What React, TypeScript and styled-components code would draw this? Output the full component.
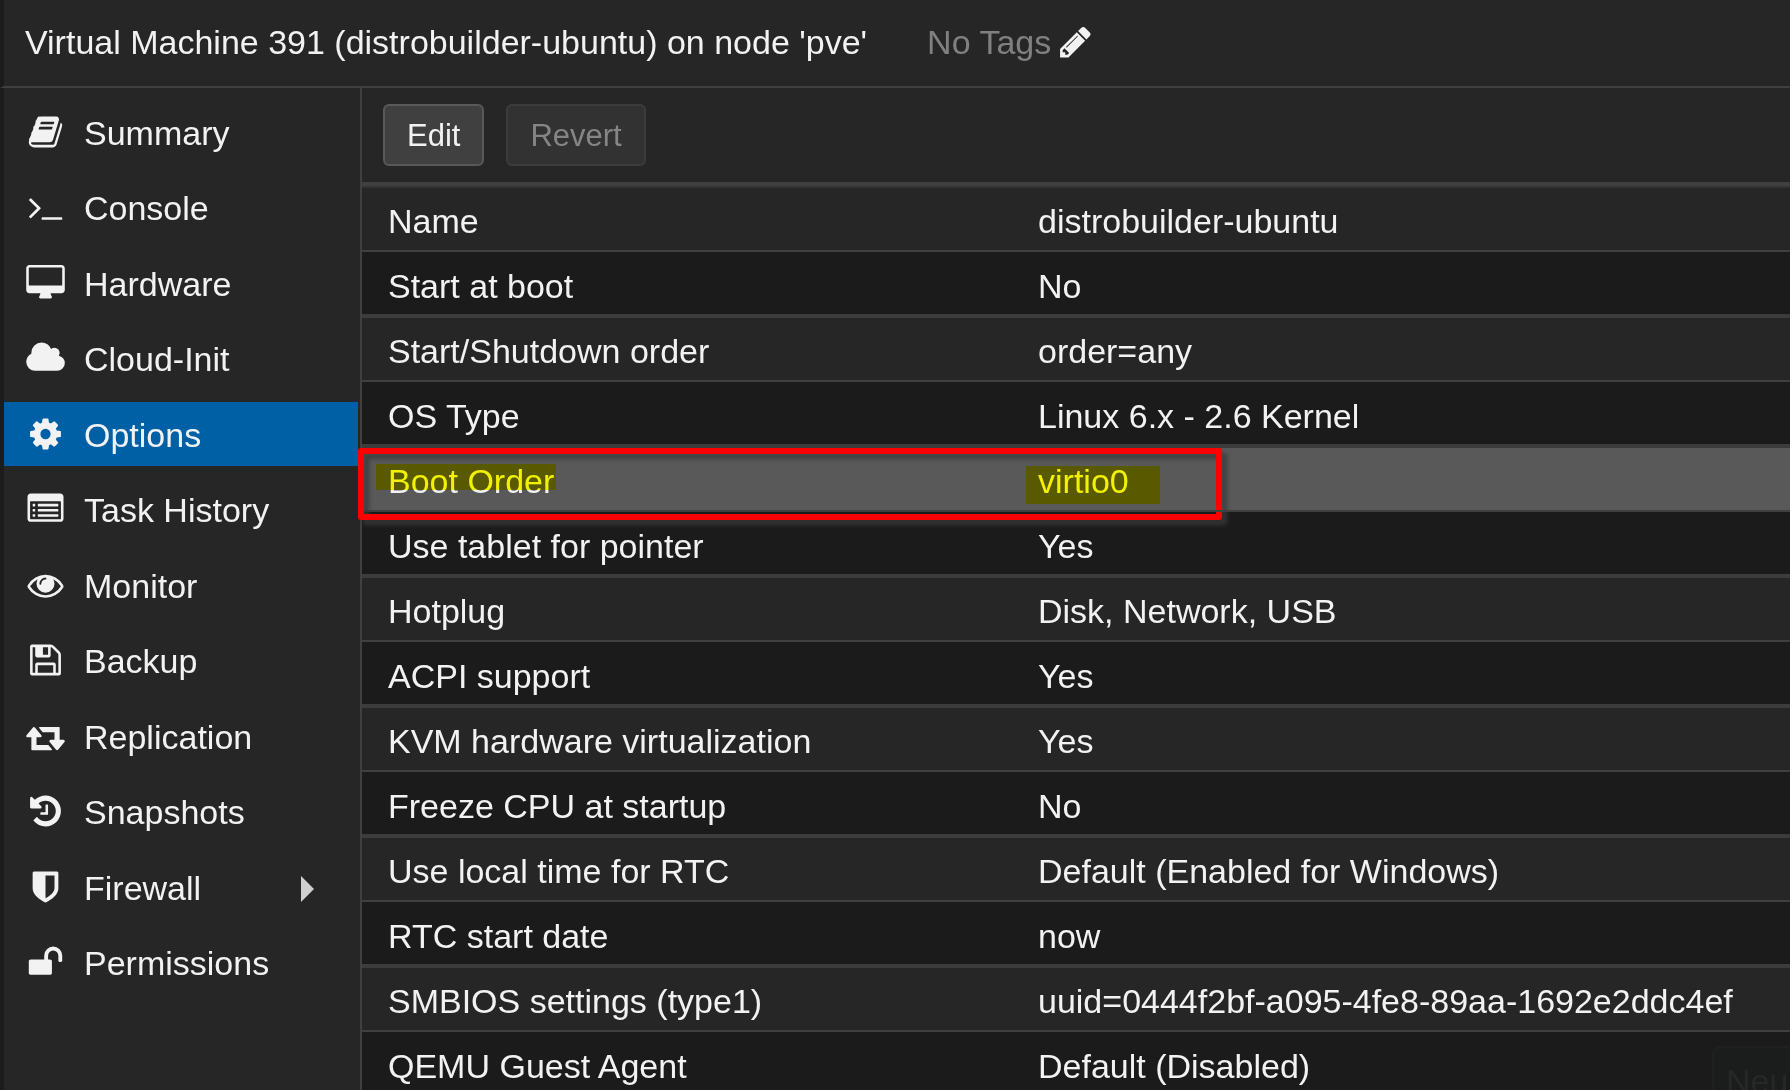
import React from 'react';
import styled, { createGlobalStyle, css } from 'styled-components';

const GlobalStyle = createGlobalStyle`
  *, *::before, *::after { box-sizing: border-box; }
  html, body, #root { height: 100%; }
  body {
    margin: 0;
    overflow: hidden;
    background: #262626;
    color: #f2f2f2;
    font: 34px/40px "Liberation Sans", Arial, sans-serif;
  }
`;

const Page = styled.div`
  position: relative;
  height: 100%;
  display: flex;
  flex-direction: column;
  overflow: hidden;
  border: solid #ffffff;
  border-width: 0 2px 2px 0;
`;

const Header = styled.header`
  flex: none;
  display: flex;
  align-items: center;
  height: 88px;
  padding: 0 21px 2px;
  border-left: 4px solid #1c1c1c;
  border-bottom: 2px solid #404040;
`;

const Title = styled.h1`
  margin: 0 60px 0 0;
  font-size: 34px;
  font-weight: 400;
  white-space: nowrap;
`;

const TagButton = styled.button`
  display: flex;
  align-items: center;
  gap: 5px;
  padding: 0;
  border: 0;
  background: none;
  color: #808080;
  font: inherit;
  cursor: pointer;
`;

const Body = styled.div`
  flex: 1;
  min-height: 0;
  display: flex;
`;

const Sidebar = styled.nav`
  flex: none;
  width: 362px;
  padding: 12px 2px 0 0;
  border-left: 4px solid #1c1c1c;
  border-right: 2px solid #404040;
`;

const Menu = styled.ul`
  display: flex;
  flex-direction: column;
  justify-content: space-between;
  min-height: 894px;
  margin: 0;
  padding: 0;
  list-style: none;
`;

const MenuLink = styled.a<{ $active?: boolean }>`
  display: flex;
  align-items: center;
  gap: 19px;
  height: 64px;
  padding: 0 44px 0 21px;
  color: inherit;
  text-decoration: none;
  ${p => p.$active && css`background: #0060a6;`}
`;

const IconSlot = styled.span`
  display: flex;
  justify-content: center;
  width: 40px;
`;

const Glyph = styled.svg`
  display: block;
  width: 39px;
  height: 36px;
  fill: #f2f2f2;
`;

const Arrow = styled.svg`
  display: block;
  width: 13px;
  height: 26px;
  margin-top: 4px;
  fill: #cfcfcf;
`;

const MenuLabel = styled.span`
  flex: 1;
  padding-top: 2px;
  white-space: nowrap;
`;

const Main = styled.main`
  flex: 1;
  min-width: 0;
`;

const Toolbar = styled.div`
  display: flex;
  gap: 22px;
  padding: 16px 21px;
  border-bottom: 4px solid #404040;
`;

const ToolButton = styled.button`
  height: 62px;
  padding: 2px 22px 0;
  border: 2px solid #595959;
  border-radius: 6px;
  background: #404040;
  color: #f2f2f2;
  font: inherit;
  font-size: 31px;
  &:disabled {
    border-color: #3c3c3c;
    background: #323232;
    color: #858585;
  }
`;

const OptionTable = styled.table`
  width: 100%;
  table-layout: fixed;
  border-collapse: separate;
  border-spacing: 0;
  border-top: 2px solid #333333;
`;

const OptionRow = styled.tr<{ $selected?: boolean }>`
  background: ${p => (p.$selected ? '#595959' : '#262626')};
  &:nth-child(even) { background: #1b1b1b; }
`;

const cell = css`
  position: relative;
  height: 64px;
  padding: 4px 0 0 26px;
  border-bottom: 2px solid #404040;
  font-weight: 400;
  text-align: left;
  white-space: nowrap;
  tr:nth-child(even) > & {
    height: 66px;
    padding-top: 6px;
    border-bottom: 4px solid #3c3c3c;
  }
`;

const NameCell = styled.th`
  ${cell}
  width: 650px;
`;

const ValueCell = styled.td`
  ${cell}
`;

const Marker = styled.span<{ $top: number; $width: number; $height: number }>`
  position: absolute;
  left: 14px;
  top: ${p => p.$top}px;
  width: ${p => p.$width}px;
  height: ${p => p.$height}px;
  background: #ffff00;
  mix-blend-mode: multiply;
  pointer-events: none;
`;

const Frame = styled.span`
  position: absolute;
  left: -4px;
  top: 0;
  width: 864px;
  height: 72px;
  border: 6px solid #ff0000;
  border-radius: 3px;
  filter: drop-shadow(5px 5px 2px rgba(58, 58, 58, 0.8));
  pointer-events: none;
`;

const GhostButton = styled.button`
  position: absolute;
  right: 0;
  bottom: 0;
  width: 78px;
  height: 44px;
  padding: 13px 0 0 12px;
  overflow: hidden;
  border: solid #202020;
  border-width: 2px 0 0 2px;
  border-radius: 8px 0 0 0;
  background: #1b1d1c;
  color: #262727;
  font: inherit;
  text-align: left;
`;

const icons = {
  book: 'M1703 478q40 57 18 129l-275 906q-19 64-76.500 107.500t-122.500 43.500h-923q-77 0-148.500-53.500t-99.500-131.500q-24-67-2-127 0-4 3-27t4-37q1-8-3-21.500t-3-19.500q2-11 8-21t16.500-23.500 16.500-23.500q23-38 45-91.500t30-91.500q3-10 .5-30t-.5-28q3-11 17-28t17-23q21-36 42-92t25-90q1-9-2.500-32t.5-28q4-13 22-30.500t22-22.500q19-26 42.500-84.500t27.500-96.500q1-8-3-25.500t-2-26.500q2-8 9-18t18-23 17-21q8-12 16.500-30.500t15-35 16-36 19.500-32 26.500-23.500 36-11.500 47.500 5.500l-1 3q38-9 51-9h761q74 0 114 56t18 130l-274 906q-36 119-71.500 153.500t-128.500 34.500h-869q-27 0-38 15-11 16-1 43 24 70 144 70h923q29 0 56-15.500t35-41.500l300-987q7-22 5-57 38 15 59 43zm-1064 2q-4 13 2 22.500t20 9.500h608q13 0 25.500-9.500t16.500-22.500l21-64q4-13-2-22.500t-20-9.500h-608q-13 0-25.500 9.500t-16.500 22.500zm-83 256q-4 13 2 22.500t20 9.500h608q13 0 25.500-9.500t16.500-22.500l21-64q4-13-2-22.500t-20-9.500h-608q-13 0-25.500 9.500t-16.500 22.500z',
  terminal: 'M649 983l-466 466q-10 10-23 10t-23-10l-50-50q-10-10-10-23t10-23l393-393-393-393q-10-10-10-23t10-23l50-50q10-10 23-10t23 10l466 466q10 10 10 23t-10 23zm1079 457v64q0 14-9 23t-23 9h-960q-14 0-23-9t-9-23v-64q0-14 9-23t23-9h960q14 0 23 9t9 23z',
  desktop: 'M1728 992v-832q0-13-9.500-22.500t-22.500-9.500h-1600q-13 0-22.500 9.500t-9.500 22.500v832q0 13 9.500 22.500t22.500 9.500h1600q13 0 22.500-9.500t9.500-22.500zm128-832v1088q0 66-47 113t-113 47h-544q0 37 16 77.500t32 71 16 43.500q0 26-19 45t-45 19h-512q-26 0-45-19t-19-45q0-14 16-44t32-70 16-78h-544q-66 0-113-47t-47-113v-1088q0-66 47-113t113-47h1600q66 0 113 47t47 113z',
  cloud: 'M1856 1152q0 159-112.500 271.500t-271.500 112.500h-1088q-185 0-316.500-131.500t-131.500-316.500q0-132 71-241.500t187-163.500q-2-28-2-43 0-212 150-362t362-150q158 0 286.500 88t187.500 230q70-62 166-62 106 0 181 75t75 181q0 75-41 138 129 30 213 134.500t84 239.500z',
  cog: 'M1152 896q0-106-75-181t-181-75-181 75-75 181 75 181 181 75 181-75 75-181zm512-109v222q0 12-8 23t-20 13l-185 28q-19 54-39 91 35 50 107 138 10 12 10 25t-9 23q-27 37-99 108t-94 71q-12 0-26-9l-138-108q-44 23-91 38-16 136-29 186-7 28-36 28h-222q-14 0-24.500-8.500t-11.500-21.500l-28-184q-49-16-90-37l-141 107q-10 9-25 9-14 0-25-11-126-114-165-168-7-10-7-23 0-12 8-23 15-21 51-66.500t54-70.500q-27-50-41-99l-183-27q-13-2-21-12.500t-8-23.500v-222q0-12 8-23t19-13l186-28q14-46 39-92-40-57-107-138-10-12-10-24 0-10 9-23 26-36 98.500-107.500t94.500-71.500q13 0 26 10l138 107q44-23 91-38 16-136 29-186 7-28 36-28h222q14 0 24.500 8.500t11.500 21.500l28 184q49 16 90 37l142-107q9-9 24-9 13 0 25 10 129 119 165 170 7 8 7 22 0 12-8 23-15 21-51 66.500t-54 70.500q26 50 41 98l183 28q13 2 21 12.500t8 23.500z',
  list: 'M384 1184v64q0 13-9.500 22.500t-22.500 9.500h-64q-13 0-22.500-9.500t-9.500-22.500v-64q0-13 9.500-22.500t22.500-9.500h64q13 0 22.500 9.500t9.500 22.500zm0-256v64q0 13-9.500 22.500t-22.500 9.500h-64q-13 0-22.500-9.500t-9.500-22.500v-64q0-13 9.500-22.500t22.500-9.500h64q13 0 22.500 9.500t9.500 22.500zm0-256v64q0 13-9.500 22.500t-22.500 9.500h-64q-13 0-22.500-9.500t-9.500-22.500v-64q0-13 9.500-22.500t22.500-9.500h64q13 0 22.500 9.500t9.500 22.500zm1152 512v64q0 13-9.500 22.500t-22.500 9.500h-960q-13 0-22.500-9.500t-9.500-22.500v-64q0-13 9.500-22.500t22.500-9.500h960q13 0 22.500 9.500t9.500 22.500zm0-256v64q0 13-9.500 22.500t-22.500 9.500h-960q-13 0-22.500-9.500t-9.500-22.500v-64q0-13 9.500-22.500t22.500-9.500h960q13 0 22.500 9.500t9.500 22.500zm0-256v64q0 13-9.500 22.500t-22.500 9.500h-960q-13 0-22.500-9.500t-9.500-22.500v-64q0-13 9.500-22.500t22.500-9.500h960q13 0 22.500 9.500t9.500 22.500zm128 704v-832q0-13-9.500-22.500t-22.500-9.500h-1472q-13 0-22.500 9.500t-9.500 22.500v832q0 13 9.500 22.500t22.500 9.500h1472q13 0 22.500-9.500t9.500-22.500zm128-1088v1088q0 66-47 113t-113 47h-1472q-66 0-113-47t-47-113v-1088q0-66 47-113t113-47h1472q66 0 113 47t47 113z',
  eye: 'M1664 960q-152-236-381-353 61 104 61 225 0 185-131.500 316.500t-316.500 131.500-316.500-131.500-131.500-316.500q0-121 61-225-229 117-381 353 133 205 333.500 326.500t434.500 121.500 434.500-121.500 333.500-326.500zm-720-384q0-20-14-34t-34-14q-125 0-214.500 89.500t-89.500 214.500q0 20 14 34t34 14 34-14 14-34q0-86 61-147t147-61q20 0 34-14t14-34zm848 384q0 34-20 69-140 230-376.500 368.500t-499.500 138.500-499.500-139-376.500-368q-20-35-20-69t20-69q140-229 376.500-368t499.500-139 499.500 139 376.500 368q20 35 20 69z',
  floppy: 'M512 1536h768v-384h-768v384zm896 0h128v-896q0-14-10-38.500t-20-34.500l-281-281q-10-10-34-20t-39-10v416q0 40-28 68t-68 28h-576q-40 0-68-28t-28-68v-416h-128v1280h128v-416q0-40 28-68t68-28h832q40 0 68 28t28 68v416zm-384-928v-320q0-13-9.500-22.500t-22.500-9.500h-192q-13 0-22.500 9.500t-9.500 22.500v320q0 13 9.500 22.500t22.500 9.500h192q13 0 22.500-9.500t9.500-22.500zm640 32v928q0 40-28 68t-68 28h-1344q-40 0-68-28t-28-68v-1344q0-40 28-68t68-28h928q40 0 88 20t76 48l280 280q28 28 48 76t20 88z',
  retweet: 'M1216 1568q0 13-9.500 22.500t-22.500 9.500h-960q-8 0-13.500-2t-9-7-5.500-8-3-11.500-1-11.500v-600h-192q-26 0-45-19t-19-45q0-24 15-41l320-384q19-22 49-22t49 22l320 384q15 17 15 41 0 26-19 45t-45 19h-192v384h576q16 0 25 11l160 192q7 10 7 21zm640-416q0 24-15 41l-320 384q-20 23-49 23t-49-23l-320-384q-15-17-15-41 0-26 19-45t45-19h192v-384h-576q-16 0-25-12l-160-192q-7-9-7-20 0-13 9.500-22.500t22.500-9.500h960q8 0 13.500 2t9 7 5.500 8 3 11.500 1 11.500v600h192q26 0 45 19t19 45z',
  history: 'M1664 896q0 156-61 298t-164 245-245 164-298 61q-172 0-327-72.500t-264-204.500q-7-10-6.500-22.500t8.500-20.500l137-138q10-9 25-9 16 2 23 12 73 95 179 147t225 52q104 0 198.500-40.500t163.500-109.500 109.500-163.500 40.500-198.500-40.500-198.500-109.500-163.500-163.500-109.500-198.500-40.500q-98 0-188 35.500t-160 101.500l137 138q31 30 14 69-17 40-59 40h-448q-26 0-45-19t-19-45v-448q0-42 40-59 39-17 69 14l130 129q107-101 244.500-156.500t284.500-55.500q156 0 298 61t245 164 164 245 61 298zm-640-288v448q0 14-9 23t-23 9h-320q-14 0-23-9t-9-23v-64q0-14 9-23t23-9h224v-352q0-14 9-23t23-9h64q14 0 23 9t9 23z',
  shield: 'M1344 960v-640h-448v1137q119-63 213-137 235-184 235-360zm192-768v768q0 86-33.500 170.500t-83 150-118 127.500-126.500 103-121 77.500-89.500 49.500-42.500 20q-12 6-26 6t-26-6q-16-7-42.500-20t-89.500-49.500-121-77.500-126.500-103-118-127.500-83-150-33.500-170.500v-768q0-26 19-45t45-19h1152q26 0 45 19t19 45z',
  unlock: 'M1728 576v256q0 26-19 45t-45 19h-64q-26 0-45-19t-19-45v-256q0-106-75-181t-181-75-181 75-75 181v192h96q40 0 68 28t28 68v576q0 40-28 68t-68 28h-960q-40 0-68-28t-28-68v-576q0-40 28-68t68-28h672v-192q0-185 131.500-316.500t316.500-131.500 316.500 131.500 131.500 316.500z',
  pencil: 'M491 1536l91-91-235-235-91 91v107h128v128h107zm523-928q0-22-22-22-10 0-17 7l-542 542q-7 7-7 17 0 22 22 22 10 0 17-7l542-542q7-7 7-17zm-54-192l416 416-832 832h-416v-416zm683 96q0 53-37 90l-166 166-416-416 166-165q36-38 90-38 53 0 91 38l235 234q37 39 37 91z',
};

type IconName = keyof typeof icons;

const Icon = ({ name }: { name: IconName }) => (
  <Glyph viewBox="-64 0 1920 1792" aria-hidden="true">
    <path d={icons[name]} />
  </Glyph>
);

const menu: { label: string; icon: IconName; expandable?: boolean }[] = [
  { label: 'Summary', icon: 'book' },
  { label: 'Console', icon: 'terminal' },
  { label: 'Hardware', icon: 'desktop' },
  { label: 'Cloud-Init', icon: 'cloud' },
  { label: 'Options', icon: 'cog' },
  { label: 'Task History', icon: 'list' },
  { label: 'Monitor', icon: 'eye' },
  { label: 'Backup', icon: 'floppy' },
  { label: 'Replication', icon: 'retweet' },
  { label: 'Snapshots', icon: 'history' },
  { label: 'Firewall', icon: 'shield', expandable: true },
  { label: 'Permissions', icon: 'unlock' },
];

const options: [string, string][] = [
  ['Name', 'distrobuilder-ubuntu'],
  ['Start at boot', 'No'],
  ['Start/Shutdown order', 'order=any'],
  ['OS Type', 'Linux 6.x - 2.6 Kernel'],
  ['Boot Order', 'virtio0'],
  ['Use tablet for pointer', 'Yes'],
  ['Hotplug', 'Disk, Network, USB'],
  ['ACPI support', 'Yes'],
  ['KVM hardware virtualization', 'Yes'],
  ['Freeze CPU at startup', 'No'],
  ['Use local time for RTC', 'Default (Enabled for Windows)'],
  ['RTC start date', 'now'],
  ['SMBIOS settings (type1)', 'uuid=0444f2bf-a095-4fe8-89aa-1692e2ddc4ef'],
  ['QEMU Guest Agent', 'Default (Disabled)'],
];

export default function App() {
  return (
    <>
      <GlobalStyle />
      <Page>
        <Header>
          <Title>Virtual Machine 391 (distrobuilder-ubuntu) on node 'pve'</Title>
          <TagButton type="button">
            No Tags
            <Icon name="pencil" />
          </TagButton>
        </Header>
        <Body>
          <Sidebar>
            <Menu>
              {menu.map(({ label, icon, expandable }) => (
                <li key={label}>
                  <MenuLink
                    href="#"
                    $active={label === 'Options'}
                    aria-current={label === 'Options' ? 'page' : undefined}
                  >
                    <IconSlot><Icon name={icon} /></IconSlot>
                    <MenuLabel>{label}</MenuLabel>
                    {expandable && (
                      <Arrow viewBox="0 0 13 26" aria-hidden="true">
                        <path d="M0 0L13 13L0 26Z" />
                      </Arrow>
                    )}
                  </MenuLink>
                </li>
              ))}
            </Menu>
          </Sidebar>
          <Main>
            <Toolbar>
              <ToolButton type="button">Edit</ToolButton>
              <ToolButton type="button" disabled>Revert</ToolButton>
            </Toolbar>
            <OptionTable>
              <tbody>
                {options.map(([name, value]) => {
                  const selected = name === 'Boot Order';
                  return (
                    <OptionRow key={name} $selected={selected}>
                      <NameCell scope="row">
                        {name}
                        {selected && <Marker $top={16} $width={180} $height={26} />}
                        {selected && <Frame />}
                      </NameCell>
                      <ValueCell>
                        {value}
                        {selected && <Marker $top={18} $width={134} $height={38} />}
                      </ValueCell>
                    </OptionRow>
                  );
                })}
              </tbody>
            </OptionTable>
          </Main>
        </Body>
        <GhostButton type="button">Neu</GhostButton>
      </Page>
    </>
  );
}
